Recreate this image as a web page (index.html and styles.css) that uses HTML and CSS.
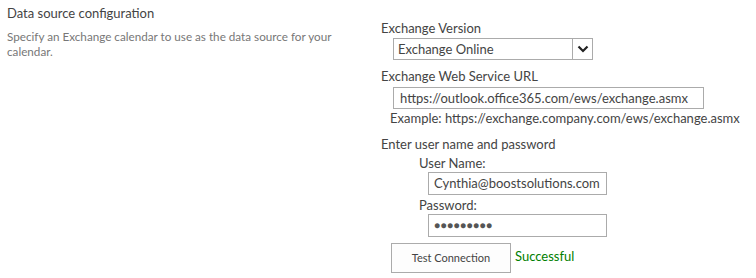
FILE: index.html
```html
<!DOCTYPE html>
<html>
<head>
<meta charset="utf-8">
<link rel="stylesheet" href="styles.css">
</head>
<body>
<div class="section">
  <div class="desc-col">
    <div class="title">Data source configuration</div>
    <div class="desc">Specify an Exchange calendar to use as the data source for your calendar.</div>
  </div>
  <div class="form-col">
    <div class="label first">Exchange Version</div>
    <div class="select">
      <span class="select-value">Exchange Online</span>
      <span class="select-btn"><svg width="12" height="8" viewBox="0 0 12 8"><path d="M1.5 1.5 L6 6 L10.5 1.5" fill="none" stroke="#222" stroke-width="2.2"/></svg></span>
    </div>
    <div class="label">Exchange Web Service URL</div>
    <div class="input url">https://outlook.office365.com/ews/exchange.asmx</div>
    <div class="example">Example: https://exchange.company.com/ews/exchange.asmx</div>
    <div class="label creds">Enter user name and password</div>
    <div class="sub-label">User Name:</div>
    <div class="input small">Cynthia@boostsolutions.com</div>
    <div class="sub-label">Password:</div>
    <div class="input small dots">●●●●●●●●●</div>
    <div class="test-row">
      <div class="button">Test Connection</div>
      <div class="success">Successful</div>
    </div>
  </div>
</div>
</body>
</html>
```

FILE: styles.css
```css
html, body {
  margin: 0;
  padding: 0;
  background: #fff;
}
body {
  font-family: "Lato", "Noto Sans", sans-serif;
  color: #444;
  width: 756px;
  height: 278px;
  overflow: hidden;
}
.section {
  display: flex;
}
.desc-col {
  width: 374px;
  padding-left: 7px;
  padding-top: 4px;
  box-sizing: border-box;
  flex-shrink: 0;
}
.title {
  font-size: 13px;
  line-height: 18px;
  color: #444;
}
.desc {
  margin-top: 7px;
  font-size: 11.7px;
  line-height: 15px;
  color: #777;
  width: 340px;
}
.form-col {
  padding-left: 7px;
  display: flex;
  flex-direction: column;
  align-items: flex-start;
  white-space: nowrap;
}
.label {
  font-size: 13px;
  line-height: 18px;
  color: #444;
}
.label.first {
  margin-top: 19px;
}
.select {
  margin-left: 12px;
  margin-top: 1px;
  width: 200px;
  height: 22px;
  box-sizing: border-box;
  border: 1px solid #ababab;
  display: flex;
  font-size: 13px;
  color: #444;
}
.select-value {
  flex: 1;
  padding-left: 4px;
  line-height: 20px;
}
.select-btn {
  width: 19px;
  border-left: 1px solid #ababab;
  display: flex;
  align-items: center;
  justify-content: center;
}
.select + .label {
  margin-top: 7px;
}
.input {
  box-sizing: border-box;
  border: 1px solid #ababab;
  height: 22px;
  line-height: 20px;
  font-size: 13px;
  color: #444;
  padding-left: 6px;
}
.input.url {
  margin-left: 12px;
  margin-top: 2px;
  width: 311px;
}
.example {
  margin-left: 9px;
  font-size: 13px;
  line-height: 18px;
  margin-top: 0;
}
.label.creds {
  margin-top: 8px;
}
.sub-label {
  margin-left: 38px;
  font-size: 13px;
  line-height: 18px;
  margin-top: 1px;
}
.input.small {
  margin-left: 47px;
  width: 179px;
  height: 23px;
  margin-bottom: 0;
  padding-left: 5px;
}
.input.dots {
  font-size: 10px;
  letter-spacing: 0.5px;
  color: #555;
}
.test-row {
  display: flex;
  align-items: center;
  margin-left: 10px;
  margin-top: 6px;
}
.button {
  width: 120px;
  height: 30px;
  box-sizing: border-box;
  border: 1px solid #ababab;
  background: #fdfdfd;
  font-size: 11px;
  line-height: 28px;
  text-align: center;
  color: #444;
}
.success {
  margin-left: 4px;
  font-size: 13px;
  color: #008000;
  margin-top: -4px;
}
```
